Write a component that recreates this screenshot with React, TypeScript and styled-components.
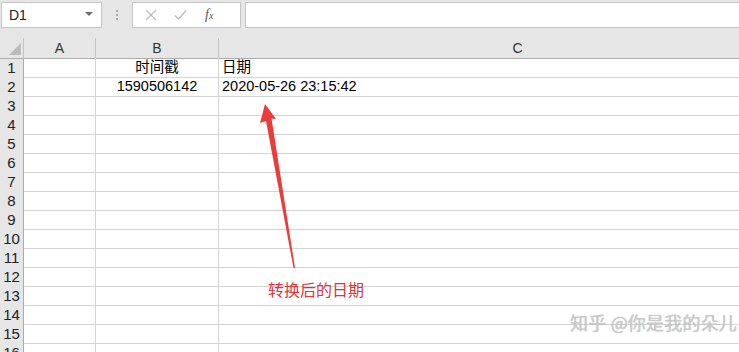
import React from 'react'
import styled, { createGlobalStyle } from 'styled-components'

const GlobalStyle = createGlobalStyle`
    html, body {
        margin: 0;
        padding: 0;
        background: #ffffff;
    }
    body {
        font-family: "Liberation Sans", "Noto Sans CJK SC", sans-serif;
    }
`

const Page = styled.div`
    position: relative;
    width: 739px;
    height: 352px;
    overflow: hidden;
    background: #e6e6e6;
`

const Toolbar = styled.div`
    display: flex;
    align-items: stretch;
    height: 26px;
    padding: 2px 0 0 1px;
`

const NameBox = styled.div`
    display: flex;
    align-items: center;
    justify-content: space-between;
    width: 101px;
    box-sizing: border-box;
    padding: 0 8px 0 7px;
    background: #ffffff;
    border: 1px solid #c6c6c6;
    font-size: 14px;
    color: #222;
`

const Caret = styled.span`
    width: 0;
    height: 0;
    border-left: 4px solid transparent;
    border-right: 4px solid transparent;
    border-top: 4px solid #6b6b6b;
    margin-top: -2px;
`

const Dots = styled.div`
    width: 30px;
    display: flex;
    flex-direction: column;
    align-items: center;
    justify-content: center;
    gap: 2px;
    span {
        width: 2px;
        height: 2px;
        background: #a8a8a8;
    }
`

const FuncBox = styled.div`
    display: flex;
    align-items: center;
    width: 109px;
    box-sizing: border-box;
    padding: 0 0 0 12px;
    gap: 17px;
    background: #ffffff;
    border: 1px solid #c6c6c6;
`

const Fx = styled.span`
    font-family: "Liberation Serif", serif;
    font-style: italic;
    font-size: 14px;
    color: #555;
    margin-left: 1px;
    sub {
        font-size: 10px;
        vertical-align: baseline;
    }
`

const FormulaInput = styled.div`
    flex: 1;
    margin-left: 4px;
    background: #ffffff;
    border: 1px solid #c6c6c6;
    border-right: none;
`

const Sheet = styled.div`
    margin-top: 10px;
    width: 830px;
    background: #ffffff;
`

const Row = styled.div<{ $header?: boolean }>`
    display: grid;
    grid-template-columns: 24px 72px 123px 598px;
    height: ${(p) => (p.$header ? '20px' : '19px')};
    background: ${(p) => (p.$header ? '#e6e6e6' : '#ffffff')};
`

const Cell = styled.div<{ $align?: 'left' | 'center' }>`
    box-sizing: border-box;
    border-right: 1px solid #d4d4d4;
    border-bottom: 1px solid #d4d4d4;
    padding: 0 3px;
    font-size: 14.5px;
    line-height: 18px;
    color: #000;
    text-align: ${(p) => p.$align ?? 'left'};
    white-space: nowrap;
    font-family: "Liberation Sans", "Noto Sans CJK SC", sans-serif;
`

const ColHead = styled.div`
    box-sizing: border-box;
    border-right: 1px solid #c4c4c4;
    border-bottom: 1px solid #ababab;
    text-align: center;
    font-size: 14px;
    line-height: 20px;
    color: #333;
`

const Corner = styled.div`
    position: relative;
    box-sizing: border-box;
    border-right: 1px solid #c4c4c4;
    border-bottom: 1px solid #ababab;
    &::after {
        content: '';
        position: absolute;
        right: 2px;
        bottom: 3px;
        width: 0;
        height: 0;
        border-left: 12px solid transparent;
        border-bottom: 12px solid #bcbcbc;
    }
`

const RowHead = styled.div`
    box-sizing: border-box;
    background: #e6e6e6;
    border-right: 1px solid #ababab;
    border-bottom: 1px solid #c4c4c4;
    text-align: center;
    font-size: 15px;
    line-height: 19px;
    color: #222;
`

const Note = styled.div`
    position: absolute;
    left: 268px;
    top: 277px;
    font-family: "Noto Sans CJK SC", sans-serif;
    font-size: 16px;
    color: #d9363e;
`

const Watermark = styled.div`
    position: absolute;
    left: 570px;
    top: 309px;
    font-family: "Noto Sans CJK SC", sans-serif;
    font-size: 18px;
    color: rgba(205, 205, 205, 0.95);
    text-shadow: 0 0 1px rgba(110, 110, 110, 0.55);
    letter-spacing: 0.2px;
`

const Overlay = styled.svg`
    position: absolute;
    left: 0;
    top: 0;
    pointer-events: none;
`

const rows: { n: number; b?: string; c?: string }[] = [
    { n: 1, b: '时间戳', c: '日期' },
    { n: 2, b: '1590506142', c: '2020-05-26 23:15:42' },
    ...Array.from({ length: 14 }, (_, i) => ({ n: i + 3 })),
]

const App = () => {
    return (
        <Page>
            <GlobalStyle />
            <Toolbar>
                <NameBox>
                    D1
                    <Caret />
                </NameBox>
                <Dots>
                    <span />
                    <span />
                    <span />
                </Dots>
                <FuncBox>
                    <svg width="12" height="12" viewBox="0 0 12 12">
                        <path d="M1 1 L11 11 M11 1 L1 11" stroke="#bdbdbd" strokeWidth="1.3" fill="none" />
                    </svg>
                    <svg width="13" height="12" viewBox="0 0 13 12">
                        <path d="M1 6.5 L4.5 10 L12 1.5" stroke="#bdbdbd" strokeWidth="1.5" fill="none" />
                    </svg>
                    <Fx>
                        f<sub>x</sub>
                    </Fx>
                </FuncBox>
                <FormulaInput />
            </Toolbar>
            <Sheet>
                <Row $header>
                    <Corner />
                    <ColHead>A</ColHead>
                    <ColHead>B</ColHead>
                    <ColHead>C</ColHead>
                </Row>
                {rows.map((r) => (
                    <Row key={r.n}>
                        <RowHead>{r.n}</RowHead>
                        <Cell />
                        <Cell $align="center">{r.b}</Cell>
                        <Cell>{r.c}</Cell>
                    </Row>
                ))}
            </Sheet>
            <Overlay width="739" height="352" viewBox="0 0 739 352">
                <polygon
                    points="265,104 276,119 271.5,118.5 295,268 293.5,268 266,121 260,123"
                    fill="#ec3b3b"
                />
            </Overlay>
            <Note>转换后的日期</Note>
            <Watermark>知乎 @你是我的朵儿</Watermark>
        </Page>
    )
}

export default App
